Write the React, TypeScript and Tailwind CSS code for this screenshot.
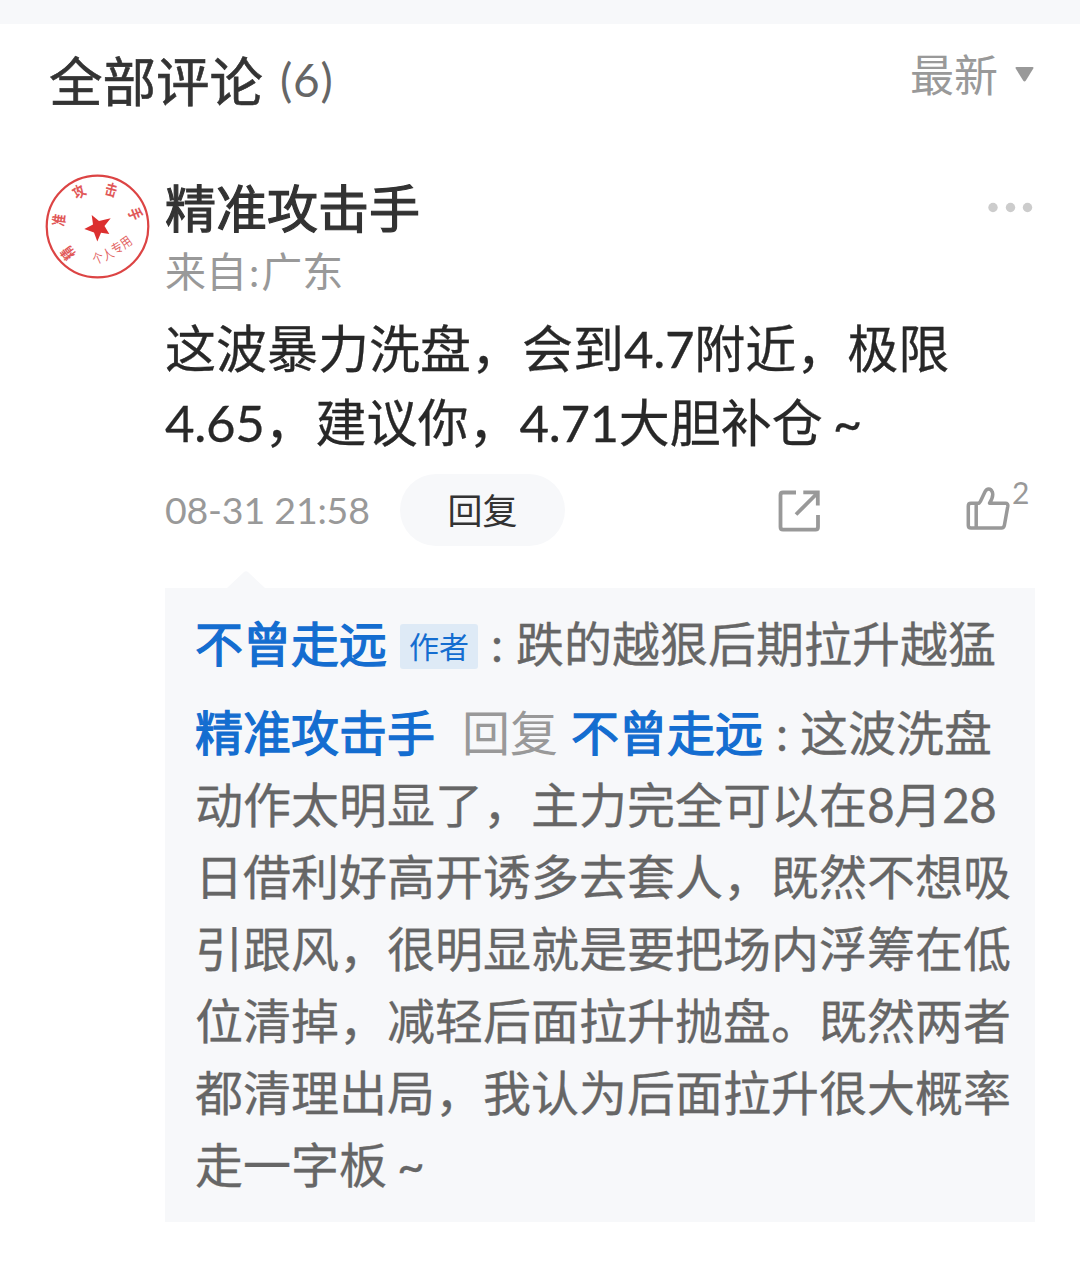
import type { ReactNode } from "react";

const REPLY_LINES = [
  "日借利好高开诱多去套人，既然不想吸",
  "引跟风，很明显就是要把场内浮筹在低",
  "位清掉，减轻后面拉升抛盘。既然两者",
  "都清理出局，我认为后面拉升很大概率",
];

export default function App() {
  return (
    <div className="h-[1270px] w-[1080px] overflow-hidden bg-white whitespace-nowrap font-[Lato,'Noto_Sans_CJK_SC',sans-serif]">
      <div className="h-6 bg-[#f7f8fa]" />
      <Header />
      <Comment />
    </div>
  );
}

function Header() {
  return (
    <header className="flex h-[150px] items-start justify-between pr-[46px] pl-[49px]">
      <h1 className="flex pt-[17px] text-[53.5px] leading-[80px] text-[#333] [-webkit-text-stroke:0.6px_#333]">
        全部评论
        <span className="-mt-px ml-[17px] text-[46px] tracking-[0.8px] text-[#666] [-webkit-text-stroke:0]">(6)</span>
      </h1>
      <button type="button" className="flex items-center pt-[19px] text-[44px] leading-[64px] text-[#999]">
        最新
        <svg className="-mt-[2px] ml-[17px]" width="19" height="15" viewBox="0 0 19 15" fill="#999">
          <path d="M1.5 0h16q1.5 0 .8 1.4l-7.4 12.2q-1.4 2-2.8 0L.7 1.4Q0 0 1.5 0z" />
        </svg>
      </button>
    </header>
  );
}

function Comment() {
  return (
    <article className="flex pr-[45px] pl-[45px]">
      <Stamp />
      <div className="ml-[15px] w-[870px]">
        <div className="flex justify-between">
          <h2 className="h-[70px] text-[51px] leading-[70px] font-normal text-[#333] [-webkit-text-stroke:1.2px_#333]">
            精准攻击手
          </h2>
          <svg className="mt-[28px] mr-[2px]" width="46" height="12" viewBox="0 0 46 12" fill="#ccc">
            <circle cx="6" cy="5.5" r="4.7" />
            <circle cx="23.5" cy="5.5" r="4.7" />
            <circle cx="40.5" cy="5.5" r="4.7" />
          </svg>
        </div>
        <p className="h-[68px] text-[41px] leading-[56px] text-[#999]">
          来自<span className="mx-[2px]">:</span>广东
        </p>
        <div className="text-[51px] leading-[74px] text-[#282828] [-webkit-text-stroke:0.3px_#282828]">
          <p>
            这波暴力洗盘，会到<span className="tracking-[-0.3px]">4.7</span>附近，极限
          </p>
          <p>
            <span className="tracking-[-0.3px]">4.65</span>，建议你，
            <span className="tracking-[-0.4px]">4.71</span>大胆补仓
            <span className="ml-[10px]">~</span>
          </p>
        </div>
        <Actions />
        <Replies />
      </div>
    </article>
  );
}

function Actions() {
  return (
    <div className="mt-[14px] flex h-[72px] items-center">
      <time className="w-[235px] pt-px text-[37.5px] tracking-[-0.2px] text-[#999]">08-31 21:58</time>
      <button type="button" className="h-[72px] w-[165px] rounded-full bg-[#f7f8fa] text-[35px] leading-[72px] text-[#333]">
        回复
      </button>
      <svg
        className="mt-[2px] ml-[210px]"
        width="50"
        height="50"
        viewBox="775 486 50 50"
        fill="none"
        stroke="#999"
        strokeWidth="3.8"
      >
        <path d="M796 492.5H783q-2.5 0-2.5 2.5v32q0 2.7 2.5 2.7h32.5q2.5 0 2.500-2.7V515M803.300 492.300H817.800V505.500M817 493.500L796 514.500" />
      </svg>
      <svg
        className="mt-[2px] ml-[137px]"
        width="50"
        height="50"
        viewBox="962 486 50 50"
        fill="none"
        stroke="#999"
        strokeWidth="3.5"
        strokeLinejoin="round"
      >
        <path d="M979 503.300H971q-2.700 0-2.700 2.700v19.500q0 2.500 2.700 2.500h30.500q2.300 0 2.800-2.300l3.500-19.500q.4-2.900-2.300-2.900H989.500c3.200-5 4-8.500 2.700-11.500-1.500-4-5.500-3.700-7.200 0l-4.500 9.500-1.500 2zM976.200 504V528" />
      </svg>
      <span className="-mt-[36px] text-[30px] leading-[36px] text-[#999]">2</span>
    </div>
  );
}

function Replies() {
  return (
    <section className="mt-[25px]">
      <svg className="ml-[62px] block" width="38" height="17" viewBox="0 0 38 17" fill="#f7f8fa">
        <path d="M0 17L17 1q2-1.5 4 0L38 17z" />
      </svg>
      <div className="h-[634px] bg-[#f7f8fa] pt-[20px] pl-[30px] text-[48px] leading-[72px] text-[#666] [-webkit-text-stroke:0.3px_#666]">
        <p className="mb-[17px] flex h-[72px] items-center">
          <UserName>不曾走远</UserName>
          <span className="mt-[4px] ml-[13px] flex h-[45px] w-[78px] items-center justify-center rounded-[3px] bg-[#deeaf6] pb-px text-[30px] text-[#146dd0] [-webkit-text-stroke:0]">
            作者
          </span>
          <span className="ml-[13px] w-[25px]">:</span>
          跌的越狠后期拉升越猛
        </p>
        <p className="flex h-[72px]">
          <UserName>精准攻击手</UserName>
          <span className="mr-[13px] ml-[27px] text-[#999] [-webkit-text-stroke:0]">回复</span>
          <UserName>不曾走远</UserName>
          <span className="ml-[13px] w-[24px]">:</span>
          这波洗盘
        </p>
        <p>
          动作太明显了，主力完全可以在<span className="tracking-[-0.8px]">8</span>月
          <span className="tracking-[-0.8px]">28</span>
        </p>
        {REPLY_LINES.map((line) => (
          <p key={line}>{line}</p>
        ))}
        <p>
          走一字板<span className="ml-[10px]">~</span>
        </p>
      </div>
    </section>
  );
}

function UserName({ children }: { children: ReactNode }) {
  return <span className="text-[#146dd0] [-webkit-text-stroke:1.3px_#146dd0]">{children}</span>;
}

// x, y, rotation of each character round the rim
const RIM: [string, number, number, number][] = [
  ["精", 23, 79, -128],
  ["准", 14, 46, -82],
  ["攻", 34, 18, -32],
  ["击", 66, 16, 14],
  ["手", 90, 40, 68],
];

const INNER: [string, number, number, number][] = [
  ["个", 53, 84, -24],
  ["人", 63, 80, -28],
  ["专", 72, 74, -32],
  ["用", 81, 68, -36],
];

function Stamp() {
  return (
    <svg className="shrink-0" width="105" height="105" viewBox="0 0 105 105" fill="#dc3c3c">
      <circle cx="52.5" cy="52.5" r="50.8" fill="none" stroke="#dc4444" strokeWidth="2.2" />
      <path
        fill="#dc2f2f"
        d="M46.7 41L54 47L65.7 44.3L59.5 52L64.3 60L56 58.700L52.3 67.500L49 58.500L39.300 55L48 50.500z"
      />
      {RIM.map(([char, x, y, angle]) => (
        <text
          key={char}
          transform={`translate(${x} ${y}) rotate(${angle}) scale(0.85 1.1)`}
          fontSize="14"
          fontWeight="700"
          textAnchor="middle"
          y="5"
          opacity="0.85"
        >
          {char}
        </text>
      ))}
      {INNER.map(([char, x, y, angle]) => (
        <text
          key={char}
          transform={`translate(${x} ${y}) rotate(${angle}) scale(0.9 1.1)`}
          fontSize="12"
          textAnchor="middle"
          y="4.5"
          opacity="0.8"
        >
          {char}
        </text>
      ))}
    </svg>
  );
}
